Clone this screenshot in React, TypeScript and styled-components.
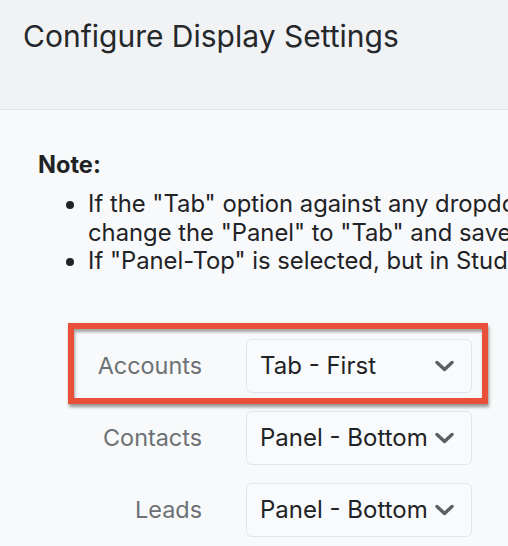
import React from 'react';
import styled, { createGlobalStyle } from 'styled-components';

type RowProps = {
  label: string;
  value: string;
  highlighted?: boolean;
};

const rows: RowProps[] = [
  { label: 'Accounts', value: 'Tab - First', highlighted: true },
  { label: 'Contacts', value: 'Panel - Bottom' },
  { label: 'Leads', value: 'Panel - Bottom' },
];

const GlobalStyle = createGlobalStyle`
  html, body {
    margin: 0;
    padding: 0;
    overflow: hidden;
    background: #f8f9fa;
    font-family: Inter, "Noto Sans", sans-serif;
  }
`;

const Chevron = () => (
  <svg width="19" height="12" viewBox="0 0 19 12" fill="none">
    <path d="M2 2.5l7.5 7 7.5-7" stroke="#5a5f63" strokeWidth="3.4" strokeLinecap="round" strokeLinejoin="round" />
  </svg>
);

export default function App() {
  return (
    <>
      <GlobalStyle />
      <Page>
        <Header>
          <Title>Configure Display Settings</Title>
        </Header>
        <Body>
          <NoteTitle>Note:</NoteTitle>
          <NoteList>
            <li>
              If the "Tab" option against any dropdown is not available,
              <br />
              change the "Panel" to "Tab" and save it in Studio.
            </li>
            <li>If "Panel-Top" is selected, but in Studio the panel is set as a tab.</li>
          </NoteList>
          <Form>
            {rows.map((row) => (
              <Row key={row.label} highlighted={row.highlighted}>
                <Label>{row.label}</Label>
                <Select>
                  <SelectValue>{row.value}</SelectValue>
                  <Chevron />
                </Select>
              </Row>
            ))}
          </Form>
        </Body>
      </Page>
    </>
  );
}

const Page = styled.div`
  width: 508px;
  height: 546px;
  overflow: hidden;
`;

const Header = styled.header`
  height: 110px;
  box-sizing: border-box;
  padding: 16px 23px 0;
  background: #f1f2f4;
  border-bottom: 1px solid #e1e6e6;
`;

const Title = styled.h1`
  margin: 0;
  font-size: 30px;
  font-weight: 400;
  line-height: 40px;
  color: #25282b;
  white-space: nowrap;
`;

const Body = styled.main`
  padding: 40px 0 0 38px;
  color: #1f2326;
`;

const NoteTitle = styled.div`
  font-size: 23.6px;
  font-weight: 700;
  line-height: 30px;
`;

const NoteList = styled.ul`
  margin: 10px 0 0;
  padding-left: 50px;
  font-size: 23.8px;
  line-height: 28.5px;
  white-space: nowrap;
`;

const Form = styled.div`
  margin-top: 54px;
  display: flex;
  flex-direction: column;
  align-items: flex-start;
`;

const Row = styled.div<{ highlighted?: boolean }>`
  position: relative;
  display: grid;
  grid-template-columns: 164px 226px;
  column-gap: 44px;
  align-items: center;
  padding: 9px 0;

  &::after {
    content: '';
    display: ${(p) => (p.highlighted ? 'block' : 'none')};
    position: absolute;
    left: 30px;
    right: -16px;
    top: -7px;
    bottom: -2px;
    border: 6px solid #e8503a;
    box-shadow: 1px 3px 3px rgba(0, 0, 0, 0.4), inset 1px 3px 3px rgba(0, 0, 0, 0.35);
    pointer-events: none;
  }
`;

const Label = styled.span`
  text-align: right;
  font-size: 23.4px;
  color: #6b7175;
`;

const Select = styled.div`
  height: 54px;
  box-sizing: border-box;
  display: flex;
  align-items: center;
  justify-content: space-between;
  padding: 0 17px 0 13px;
  border: 1px solid #e0e6e7;
  border-radius: 6px;
  background: #f9fafb;
`;

const SelectValue = styled.span`
  font-size: 24px;
  color: #1f2326;
  white-space: nowrap;
`;
